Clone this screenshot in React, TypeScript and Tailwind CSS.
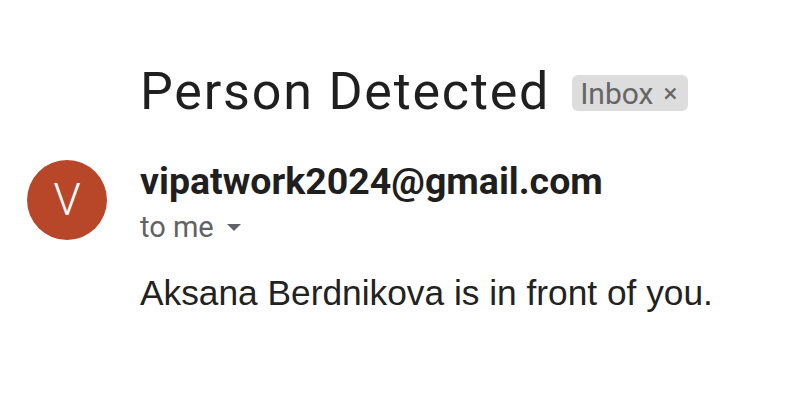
import React from 'react';

export default function App() {
  return (
    <div className="w-[790px] h-[400px] bg-white overflow-hidden">
      {/* Subject line */}
      <div className="flex items-center pl-[140px] pt-[62px]">
        <h1 className="text-[52px] leading-[60px] text-[#1f1f1f] font-['Roboto',sans-serif] tracking-[1.8px]">
          Person Detected
        </h1>
        <span className="ml-[22px] mt-[2px] flex items-center h-[36px] rounded-[6px] bg-[#dddddd] pl-[8px] pr-[11px] text-[30px] text-[#666666] font-['Roboto',sans-serif]">
          Inbox
          <span className="ml-[10px] text-[26px] leading-none">×</span>
        </span>
      </div>

      {/* Sender */}
      <div className="flex mt-[38px] pl-[27px]">
        <div className="w-[80px] h-[80px] rounded-full bg-[#b8472a] flex items-center justify-center text-white text-[44px] font-light font-['Roboto',sans-serif]">
          V
        </div>
        <div className="ml-[33px] flex flex-col">
          <div className="text-[37.5px] leading-[42px] font-bold text-[#1f1f1f] font-['Roboto',sans-serif] mt-0">
            vipatwork2024@gmail.com
          </div>
          <div className="flex items-center text-[29px] leading-[34px] text-[#5f6368] font-['Roboto',sans-serif] mt-[8px]">
            to me
            <svg className="ml-[13px] mt-[2px]" width="14" height="8" viewBox="0 0 14 8">
              <path d="M0 0 L14 0 L7 7 Z" fill="#5f6368" />
            </svg>
          </div>
        </div>
      </div>

      {/* Body */}
      <p className="pl-[140px] mt-[29px] text-[35.3px] leading-[40px] text-[#222222] font-['Liberation_Sans',Arial,sans-serif]">
        Aksana Berdnikova is in front of you.
      </p>
    </div>
  );
}
